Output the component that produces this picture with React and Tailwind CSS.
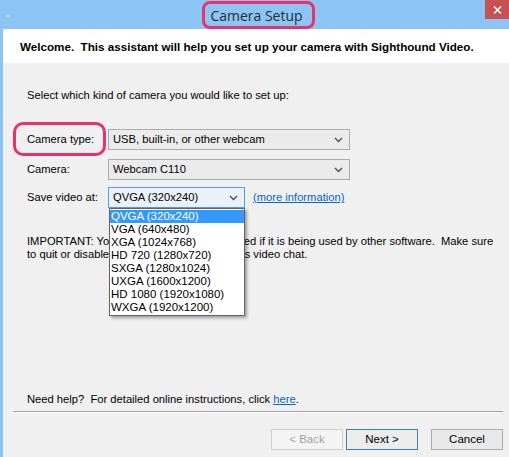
import { useState } from 'react';

const resolutions = [
  'QVGA (320x240)',
  'VGA (640x480)',
  'XGA (1024x768)',
  'HD 720 (1280x720)',
  'SXGA (1280x1024)',
  'UXGA (1600x1200)',
  'HD 1080 (1920x1080)',
  'WXGA (1920x1200)',
];

const Chevron = () => (
  <svg width="9" height="6" viewBox="0 0 9 6" className="shrink-0">
    <polyline points="1,1 4.5,4.5 8,1" fill="none" stroke="#4d4d4d" strokeWidth="1.3" />
  </svg>
);

const Combo = ({ value, width, focused }) => (
  <div
    className={`h-[21px] flex items-center justify-between pl-[4px] pr-[6px] border ${
      focused ? 'border-[#569de5] bg-[#eaf1f9]' : 'border-[#acacac] bg-[#ebebeb]'
    } ${width}`}
  >
    <span className="leading-none">{value}</span>
    <Chevron />
  </div>
);

const Button = ({ children, disabled, primary }) => (
  <button
    className={`w-[72px] h-[21px] border text-[11.5px] leading-none ${
      disabled
        ? 'border-[#cfcfcf] bg-[#f4f4f4] text-[#a3a3a3]'
        : primary
        ? 'border-[#3c7fb1] bg-[#ececec] text-black'
        : 'border-[#adadad] bg-[#e9e9e9] text-black'
    }`}
  >
    {children}
  </button>
);

export default function App() {
  const [selected] = useState(0);

  return (
    <div className="w-[509px] h-[457px] overflow-hidden bg-[#8cc5f5] flex flex-col font-['Liberation_Sans',Arial,sans-serif] text-black">
      {/* Title bar */}
      <div className="relative h-[29px] shrink-0 flex items-center justify-center">
        <span className="absolute left-[7px] top-[15px] w-[2px] h-[2px] bg-white rounded-full" />
        <span className="text-[14px] text-[#2b2b2b] font-['Open_Sans',sans-serif] pt-[1px] pl-[4px]">Camera Setup</span>
        <span className="absolute left-[202px] top-[1px] w-[113px] h-[28px] rounded-[8px] border-[3px] border-[#e6336b]" />
        <div className="absolute right-0 top-0 w-[24px] h-[19px] bg-[#c75050] flex items-center justify-center">
          <svg width="9" height="8" viewBox="0 0 9 8">
            <path d="M1 0.5 L8 7.5 M8 0.5 L1 7.5" stroke="white" strokeWidth="1.6" />
          </svg>
        </div>
      </div>

      {/* Window body */}
      <div className="flex-1 ml-[3px] bg-[#f0f0f0] flex flex-col text-[11.2px]">
        <div className="h-[34px] shrink-0 bg-white flex items-center pl-[17px] pt-[2px] font-bold text-[11.65px]">
          Welcome.&nbsp; This assistant will help you set up your camera with Sighthound Video.
        </div>

        <div className="flex-1 flex flex-col pl-[24px]">
          <p className="mt-[26px] leading-[13px]">Select which kind of camera you would like to set up:</p>

          <div className="relative mt-[27px] flex items-center">
            <span className="w-[81px]">Camera type:</span>
            <Combo value="USB, built-in, or other webcam" width="w-[242px]" />
            <span className="absolute left-[-14px] top-[-7px] w-[93px] h-[34px] rounded-[10px] border-[3px] border-[#e6336b]" />
          </div>

          <div className="mt-[9px] flex items-center">
            <span className="w-[81px]">Camera:</span>
            <Combo value="Webcam C110" width="w-[242px]" />
          </div>

          <div className="relative mt-[7px] flex items-center">
            <span className="w-[81px]">Save video at:</span>
            <Combo value={resolutions[selected]} width="w-[137px]" focused />
            <a className="ml-[8px] text-[#0066cc] underline">(more information)</a>

            {/* Open dropdown list */}
            <ul className="absolute left-[82px] top-[21px] w-[136px] bg-white border border-[#646464] shadow-[2px_2px_3px_rgba(0,0,0,0.35)] z-10 py-[1px] text-[11.5px]">
              {resolutions.map((r, i) => (
                <li
                  key={r}
                  className={`h-[13px] leading-[13px] pl-[1px] ${
                    i === selected ? 'bg-[#3399ff] text-white' : ''
                  }`}
                >
                  {r}
                </li>
              ))}
            </ul>
          </div>

          <p className="mt-[27px] leading-[12.5px] whitespace-nowrap">
            IMPORTANT: Your webcam can't be accessed if it is being used by other software.&nbsp; Make sure
            <br />
            to quit or disable other camera apps, such as video chat.
          </p>

          <p className="mt-auto leading-[13px]">
            Need help?&nbsp; For detailed online instructions, click{' '}
            <a className="text-[#0066cc] underline">here</a>.
          </p>

          <div className="mt-[5px] ml-[-14px] mr-[6px] border-t border-[#a0a0a0] border-b border-b-white" />

          <div className="mt-[16px] mb-[7px] mr-[6px] flex justify-end">
            <Button disabled>&lt; Back</Button>
            <div className="ml-[3px]">
              <Button primary>Next &gt;</Button>
            </div>
            <div className="ml-[13px]">
              <Button>Cancel</Button>
            </div>
          </div>
        </div>
      </div>
    </div>
  );
}
